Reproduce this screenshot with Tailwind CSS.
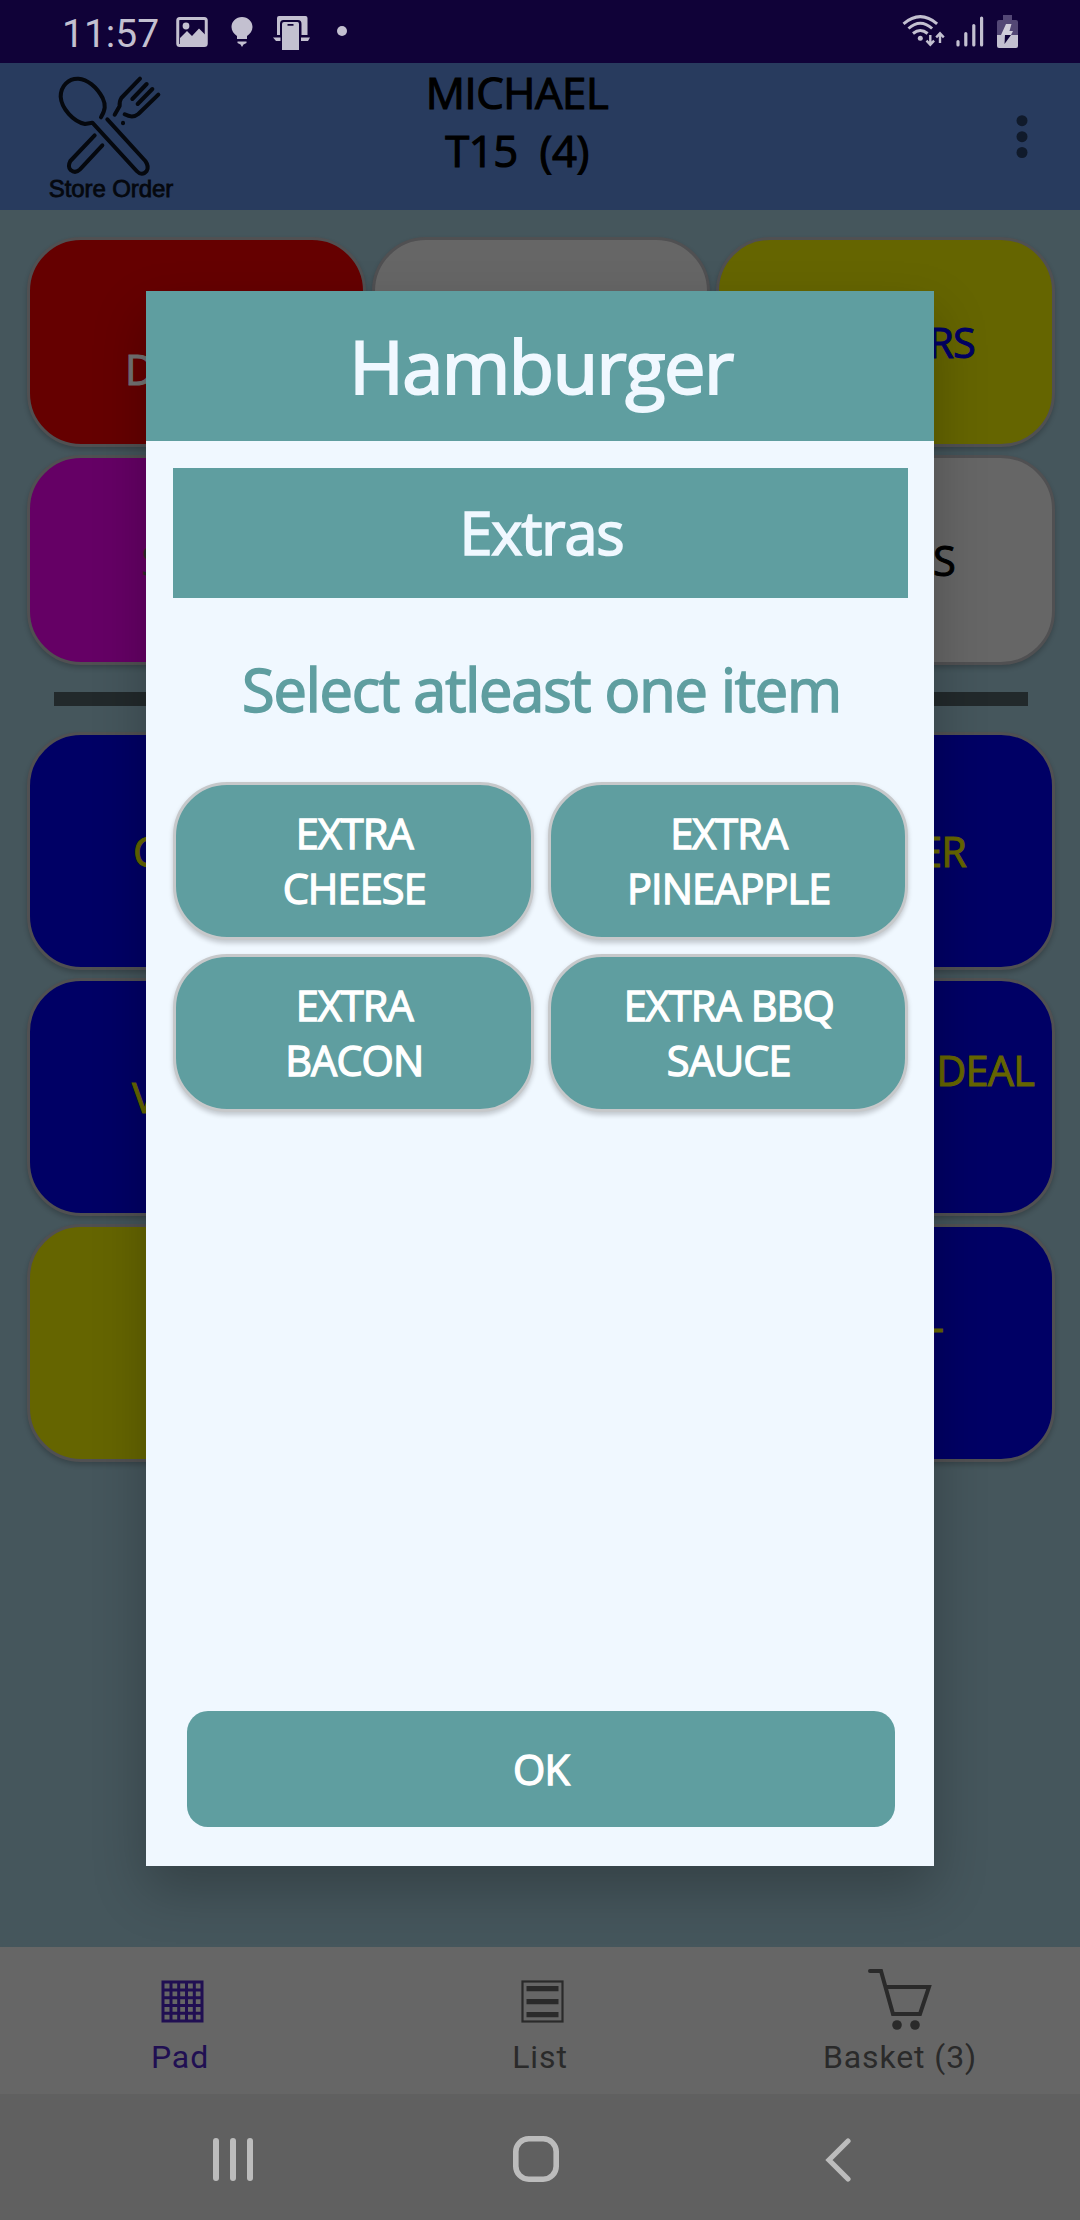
<!DOCTYPE html>
<html lang="en">
<head>
<meta charset="utf-8">
<title>Store Order</title>
<script src="https://cdn.jsdelivr.net/npm/@tailwindcss/browser@4"></script>
</head>
<body class="w-[1080px] h-[2220px] overflow-hidden">
<div class="relative w-[1080px] h-[2220px] flex flex-col bg-[#45565c] font-['Open_Sans',sans-serif] overflow-hidden">

  <!-- Status bar -->
  <header class="h-[63px] shrink-0 bg-[#100238] flex items-start text-[#c3c0d0]">
    <span class="ml-[62px] mt-[11px] w-[114px] font-['Roboto',sans-serif] text-[39px] leading-[46px]">11:57</span>
    <svg class="w-8 h-[30px] mt-[17px]" viewBox="0 0 32 30" fill="none"><rect x="1.75" y="1.5" width="28.5" height="27" rx="2" stroke="currentColor" stroke-width="3"/><circle cx="10" cy="9" r="3.4" fill="currentColor"/><path d="M4 21l7-7 5 5 7-7.500 7 7v10H4z" fill="currentColor"/></svg>
    <svg class="w-[22px] h-[31px] mt-4 ml-[23px]" viewBox="0 0 22 31" fill="currentColor"><path d="M11 1C5 1 .5 5.500.5 11c0 4 2.500 7 5.500 9v3h10v-3c3-2 5.500-5 5.500-9C21.500 5.500 17 1 11 1zM6.500 25.500h9V27l-3 1.500L11 31l-1.500-2.500-3-1.500z"/></svg>
    <svg class="w-[38px] h-[35px] mt-[15px] ml-5" viewBox="0 0 38 35" fill="currentColor"><path d="M4 20V3q0-2 2-2h26.500q2 0 2 2v17H28.500V9q0-4-3.500-4H10.500Q7 5 7 9v11zM0 22.500h7.500v3.500H3zM28 22.500h9l-2 3.500h-7z"/><path fill-rule="evenodd" d="M11 7h13.500q1.500 0 1.500 2v26H9V9q0-2 2-2zm3.500 2v1.800h6V9z"/></svg>
    <span class="size-2.5 rounded-full bg-[#c3c0d0] mt-[26px] ml-[26px]"></span>
    <svg class="w-[44px] h-[34px] mt-[13px] ml-auto" viewBox="0 0 44 34" fill="none" stroke="currentColor" stroke-width="3"><path d="M1.500 10.800Q18.300-3.500 35.100 10.800"/><path d="M6.500 15.500Q18.300 5 30.100 15.500"/><path d="M11 20.500Q18.300 14.500 25.600 20.500"/><circle cx="18.300" cy="25.300" r="2.500" fill="currentColor" stroke="none"/><g stroke-width="2.400"><path d="M28.300 22v9M24.500 27.700l3.800 4 3.800-4M38 30V21M34.200 24.300l3.800-4 3.800 4"/></g></svg>
    <svg class="w-7 h-[31px] mt-4 ml-[10px]" viewBox="0 0 28 31" stroke="currentColor" stroke-width="3.200" stroke-linecap="round"><path d="M2 25.500v3.500M9.800 17.500V29M17.800 9.500V29M25.600 2v27"/></svg>
    <svg class="w-[21px] h-[33px] mt-[15px] ml-[13px] mr-[62px]" viewBox="0 0 21 33"><path d="M6 0h9v5h4q2 0 2 2v13H0V7q0-2 2-2h4z" fill="#534775"/><path d="M0 20h21v11q0 2-2 2H2q-2 0-2-2z" fill="#c3c0d0"/><path d="M9 9h5.500l-2 7h3.500l-2 4H4z" fill="#d0cdda"/><path d="M8 20h6L7.500 29z" fill="#100238"/></svg>
  </header>

  <!-- App bar -->
  <div class="h-[147px] shrink-0 bg-[#283b5e] flex items-start text-black">
    <div class="ml-[47px] mt-[11px] w-[128px] flex flex-col items-center">
      <svg class="w-[128px] h-[104px]" viewBox="141 222 384 312" fill="none" stroke="#05080e" stroke-width="12" stroke-linecap="round" stroke-linejoin="round">
        <path d="M303 352C316 330 318 315 308 294C290 260 262 238 235 236C205 235 182 258 182 290C184 325 220 365 255 372L277 368L410 513Q426 530 440 513Q448 500 436 483L322 358"/>
        <path d="M284 406L211 483Q202 500 212 510Q226 522 240 508L307 436"/>
        <path d="M420 236L364 294Q358 303 359 318L344 344M440 252L397 297M457 267L413 312M475 284L415 342Q398 356 374 343"/>
        <path d="M369 368v2"/>
      </svg>
      <span class="-mt-px font-['Liberation_Sans',sans-serif] text-2xl leading-6 tracking-[-0.1px] whitespace-nowrap text-[#05080e] [-webkit-text-stroke:0.8px_#05080e]">Store Order</span>
    </div>
    <div class="ml-[192px] w-[300px] text-center text-[43.6px] leading-[58px] tracking-[-0.01em] whitespace-pre [-webkit-text-stroke:1.2px_black]">MICHAEL
T15  (4)</div>
    <svg class="w-3 h-11 ml-auto mr-[52px] mt-[52px]" viewBox="0 0 12 44" fill="#101a2b"><circle cx="6" cy="5.700" r="5.500"/><circle cx="6" cy="21.700" r="5.500"/><circle cx="6" cy="37.500" r="5.500"/></svg>
  </div>

  <!-- Category pad -->
  <main class="flex-1 pt-[27px] pl-[27px] pr-[25px] text-[41.5px] leading-[55px] tracking-[-0.02em]">
    <div class="grid grid-cols-3 gap-x-1.5 gap-y-2 auto-rows-[210px]">
      <div class="rounded-[54px] border-3 border-[#505052] bg-[#650000] shadow-[0_3px_5px_#0003] flex items-center pt-[55px] pl-[95px] text-[#737373] [-webkit-text-stroke:1px_#737373]">D</div>
      <div class="rounded-[54px] border-3 border-[#505052] bg-[#666666] shadow-[0_3px_5px_#0003]"></div>
      <div class="rounded-[54px] border-3 border-[#505052] bg-[#656500] shadow-[0_3px_5px_#0003] flex items-center justify-end pr-[77px] text-[#000065] [-webkit-text-stroke:1px_#000065]">RS</div>
      <div class="rounded-[54px] border-3 border-[#505052] bg-[#650065] shadow-[0_3px_5px_#0003] flex items-center pl-[111px] text-[#2b2b2b]">S</div>
      <div class="rounded-[54px] border-3 border-[#505052] bg-[#666666] shadow-[0_3px_5px_#0003]"></div>
      <div class="rounded-[54px] border-3 border-[#505052] bg-[#666666] shadow-[0_3px_5px_#0003] flex items-center justify-end pr-[97px] text-black [-webkit-text-stroke:1px_black]">S</div>
    </div>
    <div class="h-3.5 mt-[27px] mb-[26px] ml-[27px] mr-[27px] bg-[#22292b]"></div>
    <div class="grid grid-cols-3 gap-x-1.5 gap-y-2 auto-rows-[238px] text-[#656500] [-webkit-text-stroke:1px_#656500]">
      <div class="rounded-[54px] border-3 border-[#505052] bg-[#000065] shadow-[0_3px_5px_#0003] flex items-center pl-[103px]">C</div>
      <div class="rounded-[54px] border-3 border-[#505052] bg-[#000065] shadow-[0_3px_5px_#0003]"></div>
      <div class="rounded-[54px] border-3 border-[#505052] bg-[#000065] shadow-[0_3px_5px_#0003] flex items-center justify-end pr-[86px]">ER</div>
      <div class="rounded-[54px] border-3 border-[#505052] bg-[#000065] shadow-[0_3px_5px_#0003] flex items-center pl-[102px]">V</div>
      <div class="rounded-[54px] border-3 border-[#505052] bg-[#000065] shadow-[0_3px_5px_#0003]"></div>
      <div class="rounded-[54px] border-3 border-[#505052] bg-[#000065] shadow-[0_3px_5px_#0003] flex items-center justify-end pb-[53px] pr-[18px]">DEAL</div>
      <div class="rounded-[54px] border-3 border-[#505052] bg-[#656500] shadow-[0_3px_5px_#0003]"></div>
      <div class="rounded-[54px] border-3 border-[#505052] bg-[#000065] shadow-[0_3px_5px_#0003]"></div>
      <div class="rounded-[54px] border-3 border-[#505052] bg-[#000065] shadow-[0_3px_5px_#0003] flex items-center justify-end pr-[110px]">T</div>
    </div>
  </main>

  <!-- Tab bar -->
  <nav class="h-[147px] shrink-0 bg-[#666666] grid grid-cols-3 font-['Roboto',sans-serif] text-[32px] leading-[38px] tracking-[0.9px] text-[#2a2a2a]">
    <div class="flex flex-col items-center text-[#200f52]">
      <svg class="w-[43px] h-[43px] mt-[33px] ml-1" viewBox="0 0 43 43" fill="none" stroke="currentColor" stroke-width="3"><path d="M2 2h39v39H2zM10 2v39M17.700 2v39M25.500 2v39M33.300 2v39M2 10h39M2 17.700h39M2 25.500h39M2 33.300h39"/></svg>
      <span class="mt-[15px]">Pad</span>
    </div>
    <div class="flex flex-col items-center">
      <svg class="w-[43px] h-[43px] mt-[33px] ml-1" viewBox="0 0 43 43" fill="none" stroke="currentColor"><rect x="1.500" y="1.500" width="40" height="40" stroke-width="2.200"/><path d="M5.500 8.700h32M5.500 21.700h32M5.500 34.700h32" stroke-width="5.200"/></svg>
      <span class="mt-[15px]">List</span>
    </div>
    <div class="flex flex-col items-center">
      <svg class="w-16 h-[62px] mt-[21px]" viewBox="0 0 64 62" fill="none" stroke="currentColor" stroke-width="4" stroke-linecap="round"><path d="M2 3h11L25 46h27L61 19H18" /><circle cx="29" cy="57" r="4.800" fill="currentColor" stroke="none"/><circle cx="47" cy="57" r="4.800" fill="currentColor" stroke="none"/></svg>
      <span class="mt-2">Basket (3)</span>
    </div>
  </nav>

  <!-- System navigation -->
  <div class="h-[126px] shrink-0 bg-[#606060] flex items-start text-[#bcbcbc]">
    <div class="flex gap-[11px] ml-[213px] mt-11">
      <span class="w-1.5 h-[43px] rounded-full bg-[#bcbcbc]"></span>
      <span class="w-1.5 h-[43px] rounded-full bg-[#bcbcbc]"></span>
      <span class="w-1.5 h-[43px] rounded-full bg-[#bcbcbc]"></span>
    </div>
    <svg class="w-[46px] h-[46px] ml-[260px] mt-[42px]" viewBox="0 0 46 46" fill="none" stroke="currentColor" stroke-width="5.600"><rect x="2.800" y="2.800" width="40.400" height="40.400" rx="13"/></svg>
    <svg class="w-[26px] h-11 ml-[266px] mt-11" viewBox="0 0 26 44" fill="none" stroke="currentColor" stroke-width="5.200" stroke-linecap="round"><path d="M23 3L4 22l19 19"/></svg>
  </div>

  <!-- Extras dialog -->
  <section class="absolute left-[146px] top-[291px] w-[788px] h-[1575px] bg-[#f0f8ff] flex flex-col shadow-[0_24px_50px_#0000003d]">
    <h1 class="h-[150px] pl-0.5 bg-[#5f9ea0] text-[#f0f8ff] text-[74px] leading-[150px] text-center tracking-[-0.02em] [-webkit-text-stroke:2px_#f0f8ff]">Hamburger</h1>
    <div class="flex-1 flex flex-col pl-[27px] pr-[26px] pt-[27px]">
      <h2 class="h-[130px] pl-0.5 bg-[#5f9ea0] text-[#f0f8ff] text-[59.5px] leading-[128px] text-center tracking-[-0.02em] [-webkit-text-stroke:1.6px_#f0f8ff]">Extras</h2>
      <p class="h-[184px] pl-0.5 text-[#5f9ea0] text-[59.5px] leading-[182px] text-center whitespace-nowrap tracking-[-0.02em] [-webkit-text-stroke:1.6px_#5f9ea0]">Select atleast one item</p>
      <div class="grid grid-cols-2 auto-rows-[158px] gap-3.5 text-white text-[41.5px] leading-[55px] text-center tracking-[-0.022em] [-webkit-text-stroke:1.3px_white]">
        <button class="pl-0.5 rounded-[54px] border-3 border-[#c6c8ca] bg-[#5f9ea0] shadow-[0_3px_5px_#0003]">EXTRA<br>CHEESE</button>
        <button class="pl-0.5 rounded-[54px] border-3 border-[#c6c8ca] bg-[#5f9ea0] shadow-[0_3px_5px_#0003]">EXTRA<br>PINEAPPLE</button>
        <button class="pl-0.5 rounded-[54px] border-3 border-[#c6c8ca] bg-[#5f9ea0] shadow-[0_3px_5px_#0003]">EXTRA<br>BACON</button>
        <button class="pl-0.5 rounded-[54px] border-3 border-[#c6c8ca] bg-[#5f9ea0] shadow-[0_3px_5px_#0003]">EXTRA BBQ<br>SAUCE</button>
      </div>
      <button class="mt-auto mb-[39px] ml-3.5 mr-[13px] h-[116px] rounded-[21px] bg-[#5f9ea0] text-white text-[41.5px] leading-[55px] tracking-[-0.022em] [-webkit-text-stroke:1.3px_white]">OK</button>
    </div>
  </section>
</div>
</body>
</html>
